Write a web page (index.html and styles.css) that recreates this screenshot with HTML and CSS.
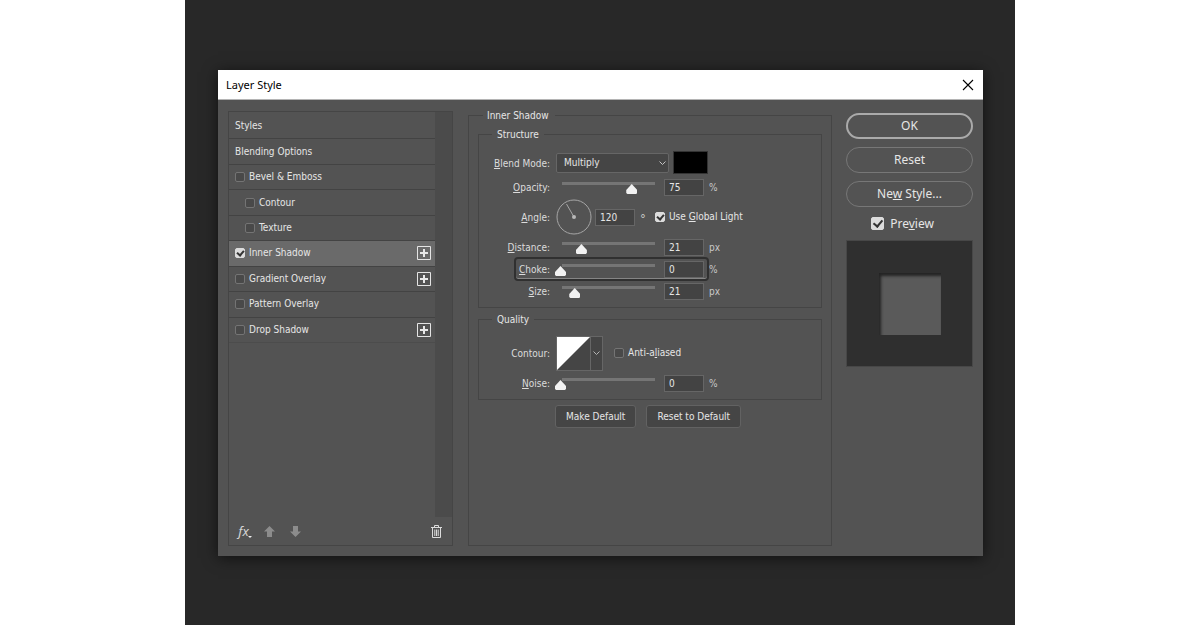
FILE: index.html
```html
<!DOCTYPE html>
<html lang="en">
<head>
  <meta charset="UTF-8">
  <meta name="viewport" content="width=device-width, initial-scale=1.0">
  <title>Layer Style</title>
  <link rel="stylesheet" href="styles.css">
</head>
<body>
  <main class="stage">
    <div class="dialog" role="dialog" aria-labelledby="dialog-title">
      <header class="titlebar">
        <h1 id="dialog-title">Layer Style</h1>
        <button class="close" aria-label="Close">
          <svg width="12" height="12" viewBox="0 0 12 12"><path d="M1 1L11 11M11 1L1 11" stroke="#000" stroke-width="1.1" fill="none"/></svg>
        </button>
      </header>

      <div class="content">
        <!-- effects list -->
        <section class="effects">
          <div class="effects-body">
            <ul class="effects-list">
              <li>Styles</li>
              <li>Blending Options</li>
              <li><label><input type="checkbox">Bevel &amp; Emboss</label></li>
              <li class="sub"><label><input type="checkbox">Contour</label></li>
              <li class="sub"><label><input type="checkbox">Texture</label></li>
              <li class="active">
                <label><input type="checkbox" checked>Inner Shadow</label>
                <button class="add" aria-label="Add Inner Shadow"><svg width="14" height="14" viewBox="0 0 14 14"><path d="M.5.5h13v13H.5z" fill="none" stroke="#e4e4e4"/><path d="M7 3v8M3 7h8" stroke="#e8e8e8" stroke-width="2"/></svg></button>
              </li>
              <li>
                <label><input type="checkbox">Gradient Overlay</label>
                <button class="add" aria-label="Add Gradient Overlay"><svg width="14" height="14" viewBox="0 0 14 14"><path d="M.5.5h13v13H.5z" fill="none" stroke="#e4e4e4"/><path d="M7 3v8M3 7h8" stroke="#e8e8e8" stroke-width="2"/></svg></button>
              </li>
              <li><label><input type="checkbox">Pattern Overlay</label></li>
              <li>
                <label><input type="checkbox">Drop Shadow</label>
                <button class="add" aria-label="Add Drop Shadow"><svg width="14" height="14" viewBox="0 0 14 14"><path d="M.5.5h13v13H.5z" fill="none" stroke="#e4e4e4"/><path d="M7 3v8M3 7h8" stroke="#e8e8e8" stroke-width="2"/></svg></button>
              </li>
            </ul>
            <div class="scrollbar"></div>
          </div>
          <div class="toolbar">
            <button class="fx" aria-label="Effects menu"><i>fx</i><svg width="4" height="2" viewBox="0 0 4 2"><path d="M0 0h4L2 2z" fill="#eee"/></svg></button>
            <button aria-label="Move up"><svg width="11" height="11" viewBox="0 0 11 11"><path d="M5.500 0L11 5.500H8V11H3V5.500H0z" fill="#8c8c8c"/></svg></button>
            <button aria-label="Move down"><svg width="11" height="11" viewBox="0 0 11 11"><path d="M5.500 11L0 5.500H3V0H8V5.500H11z" fill="#8c8c8c"/></svg></button>
            <button class="trash" aria-label="Delete">
              <svg width="11" height="13" viewBox="0 0 11 13" fill="none" stroke="#dcdcdc"><path d="M0 2.500h11M3.500 2V.5h4V2M1.500 3v9.500h8V3M3.800 4.500v6.500M5.500 4.500v6.500M7.200 4.500v6.500"/></svg>
            </button>
          </div>
        </section>

        <!-- settings of the selected effect -->
        <fieldset class="settings">
          <legend>Inner Shadow</legend>

          <fieldset class="group">
            <legend>Structure</legend>
            <div class="row row-blend">
              <label class="name" for="blend"><u>B</u>lend Mode:</label>
              <span class="select">
                <select id="blend"><option>Multiply</option><option>Normal</option></select>
                <svg width="7" height="5" viewBox="0 0 7 5"><path d="M.5.5l3 3 3-3" fill="none" stroke="#c4c4c4"/></svg>
              </span>
              <button class="swatch" aria-label="Shadow colour"></button>
            </div>
            <div class="row">
              <label class="name" for="opacity"><u>O</u>pacity:</label>
              <input type="range" value="75" aria-label="Opacity slider">
              <input type="text" id="opacity" value="75">
              <span class="unit">%</span>
            </div>
            <div class="row row-angle">
              <label class="name" for="angle"><u>A</u>ngle:</label>
              <svg class="dial" width="36" height="36" viewBox="0 0 36 36"><circle cx="18" cy="18" r="17" fill="none" stroke="#a6a6a6"/><path d="M18 18L10.500 5" stroke="#a6a6a6"/><circle cx="18" cy="18" r="2" fill="#b8b8b8"/></svg>
              <input type="text" id="angle" value="120">
              <span class="unit degree">°</span>
              <label class="check"><input type="checkbox" checked><span>Use <u>G</u>lobal Light</span></label>
            </div>
            <div class="row">
              <label class="name" for="distance"><u>D</u>istance:</label>
              <input type="range" value="22" aria-label="Distance slider">
              <input type="text" id="distance" value="21">
              <span class="unit">px</span>
            </div>
            <div class="row marked">
              <label class="name" for="choke"><u>C</u>hoke:</label>
              <input type="range" value="0" aria-label="Choke slider">
              <input type="text" id="choke" value="0">
              <span class="unit">%</span>
            </div>
            <div class="row">
              <label class="name" for="size"><u>S</u>ize:</label>
              <input type="range" value="15" aria-label="Size slider">
              <input type="text" id="size" value="21">
              <span class="unit">px</span>
            </div>
          </fieldset>

          <fieldset class="group">
            <legend>Quality</legend>
            <div class="row row-contour">
              <span class="name">Contour:</span>
              <button class="contour" aria-label="Contour">
                <svg width="33" height="33" viewBox="0 0 33 33"><path d="M0 0H33L0 33z" fill="#fff"/></svg>
                <span><svg width="7" height="5" viewBox="0 0 7 5"><path d="M.5.5l3 3 3-3" fill="none" stroke="#b4b4b4"/></svg></span>
              </button>
              <label class="check"><input type="checkbox"><span>Anti-a<u>l</u>iased</span></label>
            </div>
            <div class="row">
              <label class="name" for="noise"><u>N</u>oise:</label>
              <input type="range" value="0" aria-label="Noise slider">
              <input type="text" id="noise" value="0">
              <span class="unit">%</span>
            </div>
          </fieldset>

          <div class="defaults">
            <button>Make Default</button>
            <button>Reset to Default</button>
          </div>
        </fieldset>

        <aside class="actions">
          <button class="pill primary">OK</button>
          <button class="pill">Reset</button>
          <button class="pill">Ne<u>w</u> Style...</button>
          <label class="preview-toggle"><input type="checkbox" checked><span>Pre<u>v</u>iew</span></label>
          <div class="preview"><div class="preview-shape"></div></div>
        </aside>
      </div>
    </div>
  </main>
</body>
</html>
```

FILE: styles.css
```css
*, *::after {
  box-sizing: border-box;
}
body {
  margin: 0;
  background-color: #fff;
  color: #e6e6e6;
  font: 10px/12px "DejaVu Sans Condensed", "DejaVu Sans", sans-serif;
}
button, input, select {
  font: inherit;
  color: inherit;
  margin: 0;
}
button {
  padding: 0;
  border: none;
  background: none;
}
svg {
  display: block;
}
u {
  text-underline-offset: 1px;
  text-decoration-thickness: 1px;
}
fieldset {
  min-width: 0;
  margin: 0;
  border: 1px solid #454545;
}
legend {
  height: 12px;
  line-height: 14px;
}

.stage {
  display: flex;
  max-width: 830px;
  min-height: 100vh;
  margin: 0 auto;
  padding: 70px 32px 69px 33px;
  background-color: #282828;
}
.dialog {
  flex: 1;
  display: flex;
  flex-direction: column;
  background-color: #535353;
  box-shadow: 0 2px 14px rgba(0, 0, 0, 0.6);
}
.titlebar {
  display: flex;
  justify-content: space-between;
  align-items: center;
  height: 30px;
  padding: 0 9px 0 8px;
  background-color: #fff;
  border-bottom: 1px solid #b4b4b4;
  color: #000;
}
.titlebar h1 {
  margin: 0;
  font-family: "Noto Sans", sans-serif;
  font-size: 11px;
  font-weight: normal;
}
.content {
  flex: 1;
  display: grid;
  grid-template-columns: 225px 1fr 127px;
  padding: 9px 10px 10px;
}

/* checkboxes */
input[type="checkbox"] {
  appearance: none;
  position: relative;
  flex: none;
  width: 10px;
  height: 10px;
  border: 1px solid #747474;
  border-radius: 2px;
  background-color: #494949;
}
input[type="checkbox"]:checked {
  border-color: #dcdcdc;
  background-color: #dcdcdc;
}
input[type="checkbox"]:checked::after {
  content: "";
  position: absolute;
  left: 2px;
  top: 0;
  width: 5px;
  height: 7px;
  border: solid #333;
  border-width: 0 2px 2px 0;
  transform: rotate(40deg);
}

/* left panel */
.effects {
  display: flex;
  flex-direction: column;
  margin-top: 2px;
  border: 1px solid #454545;
}
.effects-body {
  flex: 1;
  display: flex;
}
.effects-list {
  flex: 1;
  display: grid;
  grid-template-rows: repeat(9, 1fr);
  height: 229px;
  margin: 2px 0 0;
  padding: 0;
  list-style: none;
}
.effects-list li {
  display: flex;
  justify-content: space-between;
  align-items: center;
  padding: 0 4px 0 6px;
  border-bottom: 1px solid #434343;
}
.effects-list li:last-child {
  border-color: #4c4c4c;
}
.effects-list label {
  display: flex;
  align-items: center;
  gap: 4px;
}
.effects-list .sub {
  padding-left: 16px;
}
.effects-list .active {
  background-color: #6a6a6a;
}
.scrollbar {
  width: 17px;
  background-color: #4b4b4b;
}
.toolbar {
  display: flex;
  align-items: center;
  gap: 15px;
  height: 28px;
  padding: 0 10px 0 9px;
}
.fx {
  position: relative;
  width: 11px;
  font-family: "Noto Sans", sans-serif;
  font-size: 13px;
  color: #d4d4d4;
}
.fx svg {
  position: absolute;
  right: -3px;
  bottom: -1px;
}
.trash {
  margin-left: auto;
}

/* settings */
.settings {
  margin: 0 14px 0 15px;
  padding: 0 9px;
}
.settings > legend {
  margin-left: 5px;
  padding: 0 6px 0 4px;
}
.group {
  margin-top: 5px;
  padding: 9px 0 5px;
}
.settings > legend + .group {
  margin-top: 7px;
}
.group > legend {
  margin-left: 13px;
  padding: 0 5px;
}
.row {
  display: flex;
  align-items: center;
  height: 22px;
}
.row-blend {
  height: 27px;
}
.row-angle {
  height: 38px;
}
.row-contour {
  height: 38px;
}
.name {
  flex: none;
  width: 71px;
  margin-right: 6px;
  padding-top: 2px;
  text-align: right;
  color: #dcdcdc;
}
.select {
  position: relative;
  margin-right: 4px;
}
.select select {
  appearance: none;
  display: block;
  width: 113px;
  height: 20px;
  padding: 1px 7px 0;
  border: 1px solid #666;
  border-radius: 2px;
  background-color: #454545;
}
.select svg {
  position: absolute;
  right: 3px;
  top: 8px;
  pointer-events: none;
}
.swatch {
  width: 35px;
  height: 23px;
  border: 1px solid #333;
  background-color: #000;
}
input[type="range"] {
  appearance: none;
  width: 106px;
  height: 14px;
  margin: 0 3px 0 -1px;
  background: linear-gradient(#757575, #757575) 7px 2px / 93px 3px no-repeat;
}
input[type="range"]::-webkit-slider-runnable-track {
  height: 14px;
}
input[type="range"]::-webkit-slider-thumb {
  appearance: none;
  width: 11px;
  height: 10px;
  margin-top: 4px;
  background-color: #f2f2f2;
  clip-path: polygon(50% 0, 100% 60%, 100% 90%, 90% 100%, 10% 100%, 0 90%, 0 60%);
}
input[type="text"] {
  width: 40px;
  height: 17px;
  padding: 0 4px;
  border: 1px solid #666;
  background-color: #434343;
}
.unit {
  margin-left: 5px;
  padding-top: 2px;
  color: #c8c8c8;
}
.degree {
  width: 10px;
  padding-top: 4px;
  font-size: 13px;
}
.dial {
  margin-right: 3px;
}
.check {
  display: flex;
  align-items: center;
  gap: 4px;
  margin-left: 5px;
}
.marked {
  position: relative;
}
.marked::after {
  content: "";
  position: absolute;
  left: 35px;
  top: -1px;
  width: 195px;
  height: 24px;
  border: 2px solid #303030;
  border-radius: 4px;
  box-shadow: inset 0 -1px #858585;
  pointer-events: none;
}
.contour {
  display: flex;
  width: 47px;
  height: 35px;
  margin-right: 6px;
  border: 1px solid #666;
  background-color: #454545;
}
.contour span {
  flex: 1;
  display: grid;
  place-items: center;
  height: 33px;
  border-left: 1px solid #666;
}
.defaults {
  display: flex;
  gap: 10px;
  margin: 5px 0 0 77px;
}
.defaults button {
  height: 23px;
  padding: 1px 10px 0;
  border: 1px solid #626262;
  border-radius: 3px;
  background-color: #454545;
}

/* right column */
.actions {
  display: flex;
  flex-direction: column;
  gap: 8px;
  padding-top: 4px;
  font-family: "Noto Sans", sans-serif;
  font-size: 12px;
}
.pill {
  height: 26px;
  border: 1px solid #777;
  border-radius: 13px;
}
.primary {
  border: 2px solid #aaa;
}
.preview-toggle {
  display: flex;
  justify-content: center;
  align-items: center;
  gap: 6px;
  height: 17px;
  padding-right: 14px;
}
.preview-toggle input[type="checkbox"] {
  width: 13px;
  height: 13px;
}
.preview-toggle input[type="checkbox"]:checked::after {
  left: 3px;
  width: 6px;
  height: 9px;
}
.preview {
  display: grid;
  place-items: center;
  height: 127px;
  border: 1px solid #474747;
  background-color: #2f2f2f;
}
.preview-shape {
  width: 62px;
  height: 62px;
  background-color: #5a5a5a;
  box-shadow: inset 2px 3px 3px #242424;
}
```
